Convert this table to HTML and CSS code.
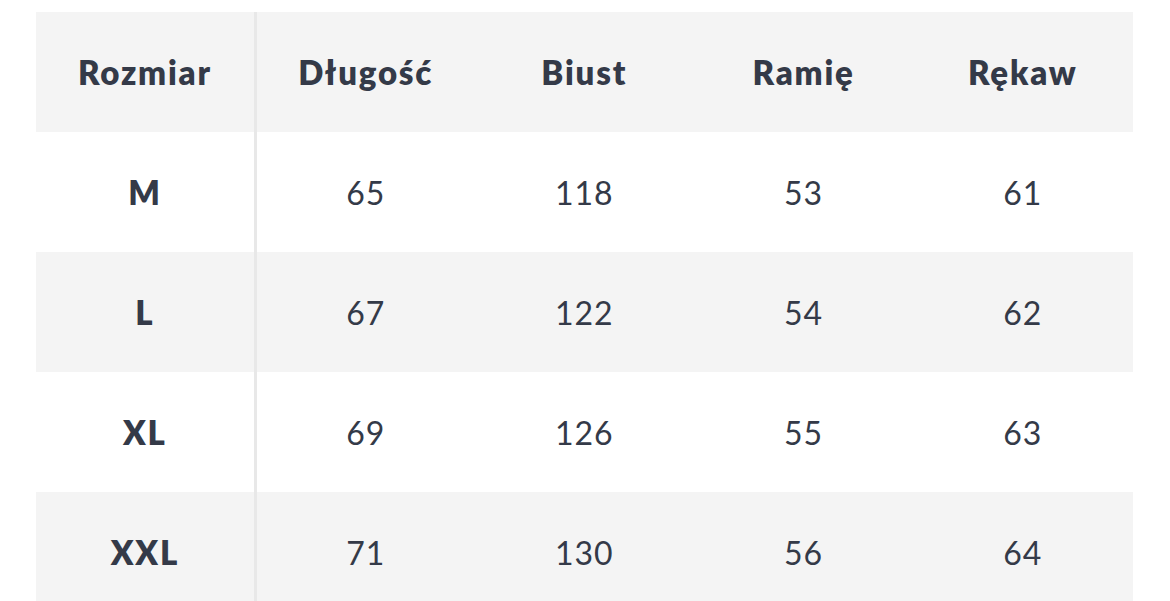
FILE: index.html
```html
<!DOCTYPE html>
<html lang="pl">
<head>
<meta charset="utf-8">
<link rel="stylesheet" href="styles.css">
</head>
<body>
<table class="size-table">
  <thead>
    <tr class="row-gray">
      <th class="col-first">Rozmiar</th>
      <th>Długość</th>
      <th>Biust</th>
      <th>Ramię</th>
      <th>Rękaw</th>
    </tr>
  </thead>
  <tbody>
    <tr class="row-white">
      <th class="col-first">M</th>
      <td>65</td><td>118</td><td>53</td><td>61</td>
    </tr>
    <tr class="row-gray">
      <th class="col-first">L</th>
      <td>67</td><td>122</td><td>54</td><td>62</td>
    </tr>
    <tr class="row-white">
      <th class="col-first">XL</th>
      <td>69</td><td>126</td><td>55</td><td>63</td>
    </tr>
    <tr class="row-gray">
      <th class="col-first">XXL</th>
      <td>71</td><td>130</td><td>56</td><td>64</td>
    </tr>
  </tbody>
</table>
</body>
</html>
```
FILE: styles.css
```css
html, body {
  margin: 0;
  background: #ffffff;
}
body {
  padding: 12px 36px;
  font-family: Lato, "Noto Sans", "Liberation Sans", sans-serif;
  color: #343a48;
}
.size-table {
  width: 1098px;
  border-collapse: collapse;
  table-layout: fixed;
}
.size-table th,
.size-table td {
  height: 120px;
  padding: 0;
  text-align: center;
  vertical-align: middle;
  box-sizing: border-box;
}
.size-table th {
  font-weight: 800;
  font-size: 33px;
  letter-spacing: 1.8px;
}
.size-table td {
  font-weight: 400;
  font-size: 32px;
  letter-spacing: 1px;
}
.col-first {
  border-right: 3px solid #e8e8e8;
}
.row-gray {
  background: #f4f4f4;
}
.row-white {
  background: #ffffff;
}
```
